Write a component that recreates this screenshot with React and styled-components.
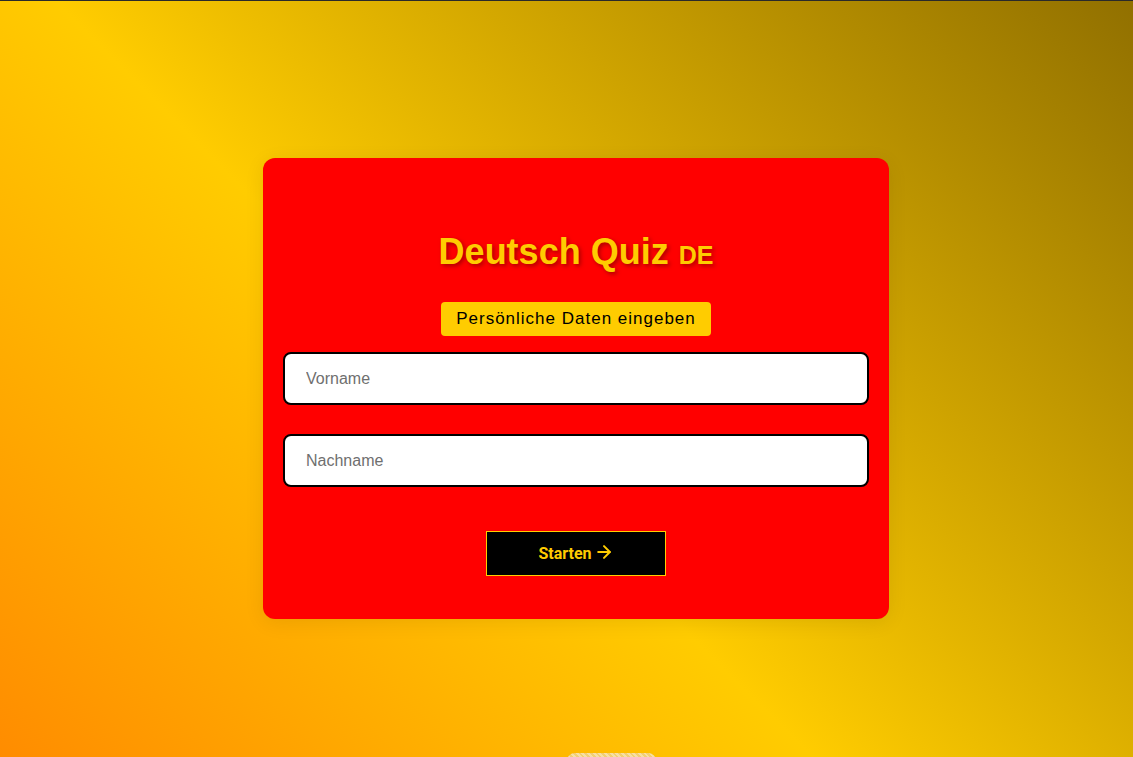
import React from "react";
import styled, { createGlobalStyle } from "styled-components";
import { ArrowRight } from "lucide-react";

const GlobalStyle = createGlobalStyle`
  html, body {
    margin: 0;
    padding: 0;
    height: 100%;
  }
  body {
    font-family: "Liberation Sans", Arial, sans-serif;
  }
  #root {
    min-height: 100%;
  }
`;

const Page = styled.div`
  box-sizing: border-box;
  height: 757px;
  overflow: hidden;
  border-top: 1px solid #2a2a2a;
  background: linear-gradient(45deg, #ff8c00 0%, #ffcc00 43%, #917000 100%);
  display: flex;
  flex-direction: column;
  align-items: center;
  padding: 157px 0 0 19px;
  position: relative;
`;

const Card = styled.div`
  box-sizing: border-box;
  width: 626px;
  height: 461px;
  background: #ff0000;
  border-radius: 12px;
  padding: 73px 20px 0;
  display: flex;
  flex-direction: column;
  align-items: center;
  box-shadow: 0 4px 20px rgba(0, 0, 0, 0.08);
`;

const Title = styled.h1`
  margin: 0;
  font-family: "Liberation Sans", Arial, sans-serif;
  font-size: 36px;
  font-weight: 700;
  line-height: 42px;
  color: #ffcc00;
  text-shadow: 2px 2px 4px rgba(110, 0, 0, 0.6);
  span {
    font-size: 25px;
  }
`;

const Label = styled.div`
  margin-top: 26px;
  background: #ffcc00;
  color: #000;
  font-size: 17px;
  letter-spacing: 1px;
  padding: 0 15px;
  height: 34px;
  line-height: 34px;
  border-radius: 4px;
`;

const Form = styled.div`
  align-self: stretch;
  display: flex;
  flex-direction: column;
  gap: 29px;
  margin-top: 16px;
`;

const Input = styled.input`
  box-sizing: border-box;
  width: 100%;
  height: 53px;
  border: 2px solid #000;
  border-radius: 8px;
  background: #fff;
  padding: 0 21px;
  font-family: "Liberation Sans", Arial, sans-serif;
  font-size: 16px;
  outline: none;
  &::placeholder {
    color: #6f6f6f;
  }
`;

const StartButton = styled.button`
  margin-top: 44px;
  width: 180px;
  height: 45px;
  background: #000;
  border: 1px solid #ffcc00;
  color: #ffcc00;
  font-family: Roboto, "Liberation Sans", sans-serif;
  font-weight: 700;
  font-size: 16px;
  display: flex;
  align-items: center;
  justify-content: center;
  gap: 2px;
  cursor: pointer;
  svg {
    margin-top: -3px;
  }
`;

const Peek = styled.div`
  position: absolute;
  left: 567px;
  top: 752px;
  width: 89px;
  height: 20px;
  border-radius: 8px;
  background-color: #f2cf74;
  background-image: repeating-linear-gradient(45deg, rgba(255,255,255,0.35) 0 2px, transparent 2px 4px);
`;

export default function App() {
  return (
    <>
      <GlobalStyle />
      <Page>
        <Card>
          <Title>
            Deutsch Quiz <span>DE</span>
          </Title>
          <Label>Persönliche Daten eingeben</Label>
          <Form>
            <Input placeholder="Vorname" />
            <Input placeholder="Nachname" />
          </Form>
          <StartButton>
            Starten <ArrowRight size={20} strokeWidth={2.4} />
          </StartButton>
        </Card>
        <Peek />
      </Page>
    </>
  );
}
